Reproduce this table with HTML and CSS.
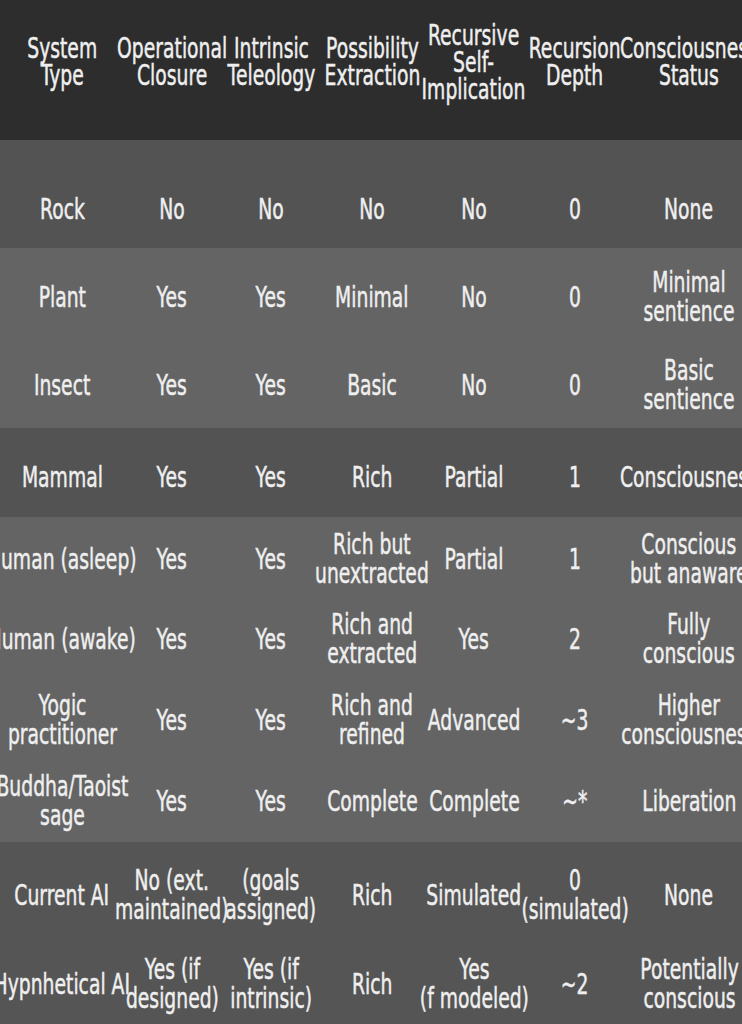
FILE: index.html
```html
<!DOCTYPE html>
<html lang="en">
<head>
<meta charset="utf-8">
<title>Consciousness table</title>
<link rel="stylesheet" href="styles.css">
</head>
<body>
<div class="page">
  <header class="row head">
    <div class="cell"><span class="t">System<br>Type</span></div>
    <div class="cell"><span class="t">Operational<br>Closure</span></div>
    <div class="cell"><span class="t">Intrinsic<br>Teleology</span></div>
    <div class="cell"><span class="t">Possibility<br>Extraction</span></div>
    <div class="cell"><span class="t">Recursive<br>Self-<br>Implication</span></div>
    <div class="cell"><span class="t">Recursion<br>Depth</span></div>
    <div class="cell"><span class="t">Consciousness<br>Status</span></div>
  </header>

  <section class="band dark">
    <div class="row r-rock">
      <div class="cell"><span class="t">Rock</span></div>
      <div class="cell"><span class="t">No</span></div>
      <div class="cell"><span class="t">No</span></div>
      <div class="cell"><span class="t">No</span></div>
      <div class="cell"><span class="t">No</span></div>
      <div class="cell"><span class="t">0</span></div>
      <div class="cell"><span class="t">None</span></div>
    </div>
  </section>

  <section class="band light">
    <div class="row r-plant">
      <div class="cell"><span class="t">Plant</span></div>
      <div class="cell"><span class="t">Yes</span></div>
      <div class="cell"><span class="t">Yes</span></div>
      <div class="cell"><span class="t">Minimal</span></div>
      <div class="cell"><span class="t">No</span></div>
      <div class="cell"><span class="t">0</span></div>
      <div class="cell"><span class="t">Minimal<br>sentience</span></div>
    </div>
    <div class="row r-insect">
      <div class="cell"><span class="t">Insect</span></div>
      <div class="cell"><span class="t">Yes</span></div>
      <div class="cell"><span class="t">Yes</span></div>
      <div class="cell"><span class="t">Basic</span></div>
      <div class="cell"><span class="t">No</span></div>
      <div class="cell"><span class="t">0</span></div>
      <div class="cell"><span class="t">Basic<br>sentience</span></div>
    </div>
  </section>

  <section class="band dark">
    <div class="row r-mammal">
      <div class="cell"><span class="t">Mammal</span></div>
      <div class="cell"><span class="t">Yes</span></div>
      <div class="cell"><span class="t">Yes</span></div>
      <div class="cell"><span class="t">Rich</span></div>
      <div class="cell"><span class="t">Partial</span></div>
      <div class="cell"><span class="t">1</span></div>
      <div class="cell"><span class="t">Consciousness</span></div>
    </div>
  </section>

  <section class="band light">
    <div class="row r-asleep">
      <div class="cell"><span class="t">Human (asleep)</span></div>
      <div class="cell"><span class="t">Yes</span></div>
      <div class="cell"><span class="t">Yes</span></div>
      <div class="cell"><span class="t">Rich but<br>unextracted</span></div>
      <div class="cell"><span class="t">Partial</span></div>
      <div class="cell"><span class="t">1</span></div>
      <div class="cell"><span class="t">Conscious<br>but anaware</span></div>
    </div>
    <div class="row r-awake">
      <div class="cell"><span class="t">Human (awake)</span></div>
      <div class="cell"><span class="t">Yes</span></div>
      <div class="cell"><span class="t">Yes</span></div>
      <div class="cell"><span class="t">Rich and<br>extracted</span></div>
      <div class="cell"><span class="t">Yes</span></div>
      <div class="cell"><span class="t">2</span></div>
      <div class="cell"><span class="t">Fully<br>conscious</span></div>
    </div>
    <div class="row r-yogic">
      <div class="cell"><span class="t">Yogic<br>practitioner</span></div>
      <div class="cell"><span class="t">Yes</span></div>
      <div class="cell"><span class="t">Yes</span></div>
      <div class="cell"><span class="t">Rich and<br>refined</span></div>
      <div class="cell"><span class="t">Advanced</span></div>
      <div class="cell"><span class="t">~3</span></div>
      <div class="cell"><span class="t">Higher<br>consciousness</span></div>
    </div>
    <div class="row r-sage">
      <div class="cell"><span class="t">Buddha/Taoist<br>sage</span></div>
      <div class="cell"><span class="t">Yes</span></div>
      <div class="cell"><span class="t">Yes</span></div>
      <div class="cell"><span class="t">Complete</span></div>
      <div class="cell"><span class="t">Complete</span></div>
      <div class="cell"><span class="t">~*</span></div>
      <div class="cell"><span class="t">Liberation</span></div>
    </div>
  </section>

  <section class="band bottom">
    <div class="row r-ai">
      <div class="cell"><span class="t">Current AI</span></div>
      <div class="cell"><span class="t">No (ext.<br>maintained)</span></div>
      <div class="cell"><span class="t">(goals<br>assigned)</span></div>
      <div class="cell"><span class="t">Rich</span></div>
      <div class="cell"><span class="t">Simulated</span></div>
      <div class="cell"><span class="t">0<br>(simulated)</span></div>
      <div class="cell"><span class="t">None</span></div>
    </div>
    <div class="row r-hypo">
      <div class="cell"><span class="t">Hypnhetical AI</span></div>
      <div class="cell"><span class="t">Yes (if<br>designed)</span></div>
      <div class="cell"><span class="t">Yes (if<br>intrinsic)</span></div>
      <div class="cell"><span class="t">Rich</span></div>
      <div class="cell"><span class="t">Yes<br>(f modeled)</span></div>
      <div class="cell"><span class="t">~2</span></div>
      <div class="cell"><span class="t">Potentially<br>conscious</span></div>
    </div>
  </section>
</div>
</body>
</html>
```

FILE: styles.css
```css
html, body {
  margin: 0;
  padding: 0;
  background: #2d2d2d;
}

body {
  width: 742px;
  height: 1024px;
  overflow: hidden;
  font-family: "DejaVu Sans", "Noto Sans", sans-serif;
  color: #efefef;
}

.page {
  width: 742px;
  overflow: hidden;
}

.row {
  display: grid;
  grid-template-columns: 124px 96px 102px 100px 104px 98px 130px;
  width: 754px;
  box-sizing: border-box;
}

.cell {
  display: flex;
  justify-content: center;
  align-items: center;
  min-width: 0;
}

.t {
  display: inline-block;
  white-space: nowrap;
  text-align: center;
  font-size: 28px;
  line-height: 29px;
  -webkit-text-stroke: 0.5px currentColor;
  transform: scaleX(0.67);
}

.head {
  height: 140px;
  padding-bottom: 16px;
  background: #2d2d2d;
}

.head .t {
  line-height: 27px;
}

.band.dark { background: #535353; }
.band.light { background: #646464; }
.band.bottom { background: #555555; }

.r-rock   { height: 108px; padding-top: 30px; }
.r-plant  { height: 94px;  padding-top: 4px; }
.r-insect { height: 86px; }
.r-mammal { height: 89px;  padding-top: 9px; }
.r-asleep { height: 81px;  padding-top: 3px; }
.r-awake  { height: 82px; }
.r-yogic  { height: 80px; }
.r-sage   { height: 82px; }
.r-ai     { height: 96px;  padding-top: 10px; }
.r-hypo   { height: 86px;  padding-top: 6px; }
```
